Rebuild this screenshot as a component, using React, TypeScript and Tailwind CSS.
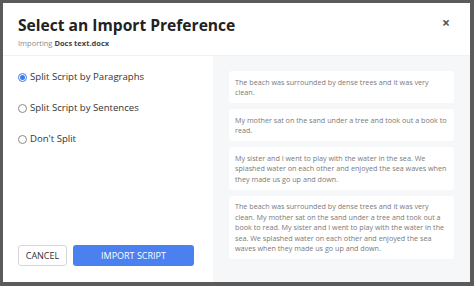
import React from "react";

const font = { fontFamily: '"Open Sans", "DejaVu Sans", sans-serif' };

const cards = [
  "The beach was surrounded by dense trees and it was very clean.",
  "My mother sat on the sand under a tree and took out a book to read.",
  "My sister and I went to play with the water in the sea. We splashed water on each other and enjoyed the sea waves when they made us go up and down.",
  "The beach was surrounded by dense trees and it was very clean. My mother sat on the sand under a tree and took out a book to read. My sister and I went to play with the water in the sea. We splashed water on each other and enjoyed the sea waves when they made us go up and down.",
];

function Radio({ checked }: { checked?: boolean }) {
  return (
    <span
      className={`inline-flex items-center justify-center w-[9px] h-[9px] rounded-full border ${
        checked ? "border-[#3b7de9] bg-white" : "border-[#8a8a8a] bg-white"
      }`}
    >
      {checked && <span className="w-[5px] h-[5px] rounded-full bg-[#3b7de9]" />}
    </span>
  );
}

export default function App() {
  return (
    <div className="w-[474px] h-[286px] bg-[#5b5b5b] p-[3px] pr-[4px] pb-[4px]" style={font}>
      <div className="w-full h-full bg-white flex flex-col overflow-hidden">
        <div className="relative h-[53px] px-[15px] pt-[13px] border-b border-[#eef0f3]">
          <div className="text-[15.6px] leading-[19px] font-bold text-[#222]">
            Select an Import Preference
          </div>
          <div className="text-[7.5px] leading-[10px] mt-[3px] text-[#8a8a8a]">
            Importing <span className="font-bold text-[#444]">Docs text.docx</span>
          </div>
          <div className="absolute right-[20px] top-[13px] text-[14px] font-bold text-[#555] leading-none">
            ×
          </div>
        </div>
        <div className="flex flex-1 min-h-0">
          <div className="w-[210px] flex flex-col justify-between px-[15px] pt-[15px] pb-[16px]">
            <div className="flex flex-col gap-[19px] text-[9.6px] text-[#333]">
              <label className="flex items-center gap-[3px] h-[12px]">
                <Radio checked /> Split Script by Paragraphs
              </label>
              <label className="flex items-center gap-[3px] h-[12px]">
                <Radio /> Split Script by Sentences
              </label>
              <label className="flex items-center gap-[3px] h-[12px]">
                <Radio /> Don't Split
              </label>
            </div>
            <div className="flex gap-[6px]">
              <button className="h-[21px] w-[49px] border border-[#d6d6d6] rounded-[3px] text-[9px] text-[#333] bg-white">
                CANCEL
              </button>
              <button className="h-[21px] w-[121px] rounded-[3px] text-[9px] text-white bg-[#4a80f0]">
                IMPORT SCRIPT
              </button>
            </div>
          </div>
          <div className="flex-1 bg-[#f6f7f9] px-[16px] pt-[15px] flex flex-col gap-[6px]">
            {cards.map((c, i) => (
              <div
                key={i}
                className="bg-white rounded-[3px] px-[6px] py-[5.5px] text-[7.2px] leading-[10.5px] text-[#7a7a7a]"
              >
                {c}
              </div>
            ))}
          </div>
        </div>
      </div>
    </div>
  );
}
